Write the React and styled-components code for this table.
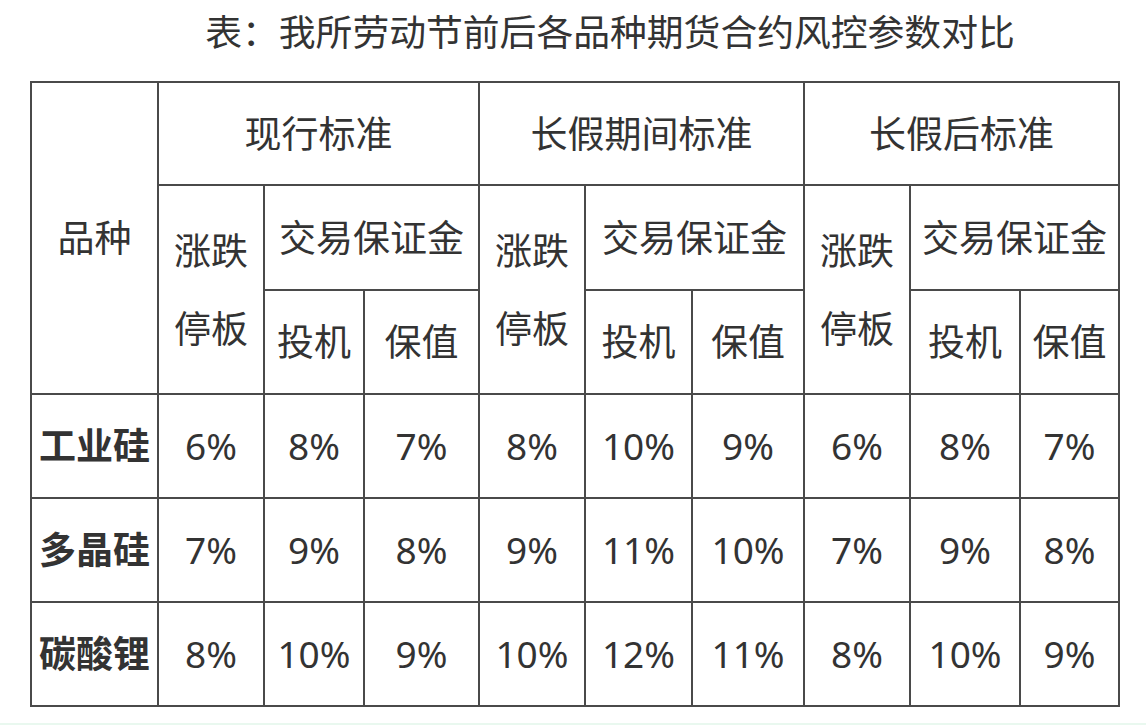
import React from "react";
import styled, { createGlobalStyle } from "styled-components";

const Global = createGlobalStyle`
  html, body { margin: 0; padding: 0; background: #fff; }
  body { font-family: "Noto Sans", "Noto Sans CJK SC", sans-serif; color: #333; }
`;

const Page = styled.div`
  width: 1146px;
  height: 725px;
  display: flex;
  flex-direction: column;
  box-sizing: border-box;
  overflow: hidden;
`;

const Title = styled.div`
  height: 81px;
  box-sizing: border-box;
  padding: 14px 0 0 74px;
  font-size: 36.8px;
  line-height: 37px;
  text-align: center;
  color: #333;
`;

const Table = styled.table`
  margin-left: 30px;
  width: 1088px;
  table-layout: fixed;
  border-collapse: collapse;
  font-size: 37px;
  color: #333;
`;

const Cell = styled.td`
  border: 2px solid #4a4a4a;
  padding: 0;
  text-align: center;
  vertical-align: middle;
  line-height: ${(p) => (p.$tall ? "78px" : "44px")};
  font-weight: ${(p) => (p.$bold ? 700 : 400)};
  height: ${(p) => (p.$h ? `${p.$h}px` : "auto")};
  box-sizing: border-box;
  white-space: nowrap;
`;

const Spacer = styled.div`
  flex: 1;
`;

const Footer = styled.div`
  height: 2px;
  background: #e9f8ef;
`;

const widths = [127, 106, 100, 115, 106, 107, 112, 106, 110, 99];

const rows = [
  ["工业硅", "6%", "8%", "7%", "8%", "10%", "9%", "6%", "8%", "7%"],
  ["多晶硅", "7%", "9%", "8%", "9%", "11%", "10%", "7%", "9%", "8%"],
  ["碳酸锂", "8%", "10%", "9%", "10%", "12%", "11%", "8%", "10%", "9%"],
];

const groups = ["现行标准", "长假期间标准", "长假后标准"];

export default function App() {
  return (
    <Page>
      <Global />
      <Title>表：我所劳动节前后各品种期货合约风控参数对比</Title>
      <Table>
        <colgroup>
          {widths.map((w, i) => (
            <col key={i} style={{ width: w }} />
          ))}
        </colgroup>
        <tbody>
          <tr>
            <Cell rowSpan={3}>品种</Cell>
            {groups.map((g) => (
              <Cell key={g} colSpan={3} $h={103}>
                {g}
              </Cell>
            ))}
          </tr>
          <tr>
            {groups.map((g) => (
              <React.Fragment key={g}>
                <Cell rowSpan={2} $tall>
                  涨跌
                  <br />
                  停板
                </Cell>
                <Cell colSpan={2} $h={105}>
                  交易保证金
                </Cell>
              </React.Fragment>
            ))}
          </tr>
          <tr>
            {groups.map((g) => (
              <React.Fragment key={g}>
                <Cell $h={104}>投机</Cell>
                <Cell>保值</Cell>
              </React.Fragment>
            ))}
          </tr>
          {rows.map((r) => (
            <tr key={r[0]}>
              {r.map((v, i) => (
                <Cell key={i} $bold={i === 0} $h={104}>
                  {v}
                </Cell>
              ))}
            </tr>
          ))}
        </tbody>
      </Table>
      <Spacer />
      <Footer />
    </Page>
  );
}
